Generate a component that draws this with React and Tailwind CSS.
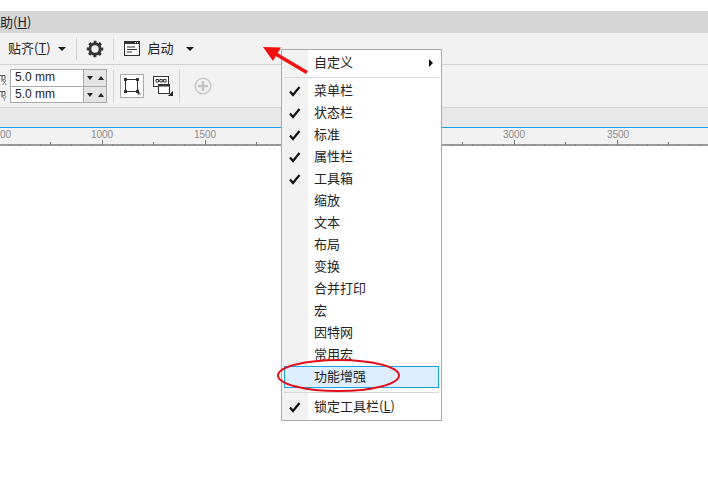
import React from 'react';

const FONT = 'font-["Noto_Sans_CJK_SC","Liberation_Sans",sans-serif]';

const MENU_ITEMS = [
    { label: '菜单栏', checked: true },
    { label: '状态栏', checked: true },
    { label: '标准', checked: true },
    { label: '属性栏', checked: true },
    { label: '工具箱', checked: true },
    { label: '缩放' },
    { label: '文本' },
    { label: '布局' },
    { label: '变换' },
    { label: '合并打印' },
    { label: '宏' },
    { label: '因特网' },
    { label: '常用宏' },
];

const Caret = ({ className = '' }) => (
    <svg width="8" height="4" viewBox="0 0 8 4" className={className}>
        <path d="M0 0h8L4 4z" fill="#1a1a1a" />
    </svg>
);

const Check = () => (
    <svg width="12" height="12" viewBox="0 0 12 12">
        <path d="M1 6.5 4 10 10.5 2" fill="none" stroke="#111" strokeWidth="2.2" />
    </svg>
);

const Divider = ({ className = '' }) => <div className={`w-px bg-[#d4d4d4] ${className}`} />;

const Gear = () => (
    <svg width="18" height="18" viewBox="0 0 18 18">
        <circle cx="9" cy="9" r="5.2" fill="none" stroke="#333" strokeWidth="3" />
        <circle cx="9" cy="9" r="7.2" fill="none" stroke="#333" strokeWidth="2.2" strokeDasharray="2.9 2.75" strokeDashoffset="1.45" transform="rotate(-90 9 9)" />
    </svg>
);

const WindowIcon = () => (
    <svg width="17" height="17" viewBox="0 0 17 17">
        <rect x="0.5" y="1.5" width="15" height="14" fill="#fff" stroke="#333" />
        <rect x="0.5" y="1.5" width="15" height="2.5" fill="#333" />
        <path d="M3 7h8M3 9.5h10M3 12h5" stroke="#333" />
        <path d="M11 2.7h1M13 2.7h1" stroke="#fff" />
    </svg>
);

const SpinRow = ({ topBorder }) => (
    <div className={`flex h-4 ${topBorder ? 'border-t border-[#aaa]' : ''}`}>
        <div className="w-[72px] bg-white pl-1 font-['Liberation_Sans',sans-serif] text-[12px] leading-[15px] text-[#222]">5.0 mm</div>
        <div className="flex flex-1 items-center justify-around border-l border-[#aaa] bg-[#e4e4e4]">
            <svg width="6" height="4" viewBox="0 0 6 4"><path d="M0 0h6L3 4z" fill="#222" /></svg>
            <svg width="6" height="4" viewBox="0 0 6 4"><path d="M0 4h6L3 0z" fill="#222" /></svg>
        </div>
    </div>
);

const AxisIcon = ({ axis }) => (
    <svg width="9" height="16" viewBox="0 0 9 16" className="block">
        <path d="M-2 5.5h4v6M2 5.5h3v4" fill="none" stroke="#555" />
        <path d="M2 9.5h3" stroke="#888" />
        <text x="2" y="15" fontSize="7" fill="#666" fontFamily="Liberation Sans">{axis}</text>
    </svg>
);

const NodeIcon = () => (
    <svg width="18" height="18" viewBox="0 0 18 18">
        <rect x="2.5" y="2.5" width="12" height="12" fill="none" stroke="#333" />
        <path d="M1 1h3v3H1zM13 1h3v3h-3zM1 13h3v3H1zM13 13h3v3h-3z" fill="#333" />
        <path d="M15 12v5.5l1.3-1.2 1.2 1.7" fill="#333" stroke="#333" strokeWidth="0.6" />
    </svg>
);

const PanelIcon = () => (
    <svg width="20" height="20" viewBox="0 0 20 20">
        <rect x="0.5" y="0.5" width="15" height="10" fill="#fff" stroke="#333" />
        <path d="M3 3.5h2.5v2.5H3zM6.8 3.5h2.5v2.5H6.8zM10.5 3.5H13v2.5h-2.5z" fill="none" stroke="#333" />
        <rect x="5.5" y="8.5" width="11" height="9" fill="#fff" stroke="#333" />
        <rect x="5.5" y="8.5" width="11" height="2" fill="#333" />
        <path d="M20 15v5h-5z" fill="#222" />
    </svg>
);

const PlusIcon = () => (
    <svg width="18" height="18" viewBox="0 0 18 18">
        <circle cx="9" cy="9" r="7.8" fill="#f2f2f2" stroke="#c8c8c8" strokeWidth="1.6" />
        <path d="M9 4v10M4 9h10" stroke="#c4c4c4" strokeWidth="2.4" />
    </svg>
);

// 500 units on the ruler = 103px, starting from the tick of "500" at x = -1.5
const Ruler = () => {
    const labels = [
        { x: 102, t: '1000' }, { x: 205, t: '1500' },
        { x: 514, t: '3000' }, { x: 618, t: '3500' },
    ];
    const ticks = [];
    for (let i = 0; i < 70; i++) {
        const x = Math.round(-1.5 + i * 10.3) + 0.5;
        const h = i % 10 === 0 ? 5 : i % 5 === 0 ? 3 : 1;
        ticks.push(<rect key={i} x={x - 0.5} y={17 - h} width="1" height={h} fill="#777" />);
    }
    return (
        <svg width="708" height="17" viewBox="0 0 708 17" className="block">
            {ticks}
            <text x="0" y="10" fontSize="10" fill="#8a8a8a" fontFamily="Liberation Sans">00</text>
            {labels.map((l) => (
                <text key={l.t} x={l.x} y="10" textAnchor="middle" fontSize="10" fill="#8a8a8a" fontFamily="Liberation Sans">{l.t}</text>
            ))}
        </svg>
    );
};

const ContextMenu = () => (
    <div className="absolute left-[281px] top-[49px] flex h-[372px] w-[161px] flex-col border border-[#aaa] bg-white text-[13px] text-[#222]">
        <div className="absolute bottom-0 left-0 top-0 w-[26px] bg-[#f2f2f2]" />
        <div className="relative flex h-[25px] items-center pl-8 pr-2">
            <span className="flex-1 pb-[2px]">自定义</span>
            <svg width="4" height="8" viewBox="0 0 4 8"><path d="M0 0l4 4-4 4z" fill="#111" /></svg>
        </div>
        <div className="relative mx-[2px] mb-[2px] mt-[2px] h-px bg-[#d8d8d8]" />
        <div className="relative">
            {MENU_ITEMS.map((item) => (
                <div key={item.label} className="flex h-[22px] items-center">
                    <span className="flex w-[32px] justify-center pr-[7px]">{item.checked && <Check />}</span>
                    <span className="pb-[2px]">{item.label}</span>
                </div>
            ))}
            <div className="mx-[2px] flex h-[22px] items-center border border-[#1ba1e2] bg-[#dceeff] pb-[2px] pl-[29px]">功能增强</div>
        </div>
        <div className="relative mx-[2px] mb-[3px] mt-[4px] h-px bg-[#d8d8d8]" />
        <div className="relative flex h-[22px] items-center">
            <span className="flex w-[32px] justify-center pr-[7px]"><Check /></span>
            <span className="pb-[2px]">锁定工具栏(<span className="underline">L</span>)</span>
        </div>
    </div>
);

const Annotations = () => (
    <svg width="708" height="486" viewBox="0 0 708 486" className="pointer-events-none absolute left-0 top-0">
        <path d="M307 72.5 274 53" stroke="#f01010" strokeWidth="3.6" fill="none" />
        <path d="M263 47 281 47.5 273 61z" fill="#f01010" />
        <ellipse cx="338.5" cy="375.5" rx="60.5" ry="15.5" fill="none" stroke="#e0101c" strokeWidth="2" />
    </svg>
);

export default function App() {
    return (
        <div className={`relative h-[486px] w-[708px] overflow-hidden bg-white ${FONT}`}>
            <div className="h-[11px]" />
            <div className="flex h-[22px] items-center bg-[#d6d6d6] text-[13px] text-[#222]">
                <span>助(<span className="underline">H</span>)</span>
            </div>
            <div className="flex h-[32px] items-center border-b border-[#d0d0d0] bg-[#f2f2f2] pl-2 text-[13px] text-[#222]">
                <span className="pb-[2px]">贴齐(<span className="underline">T</span>)</span>
                <Caret className="ml-[7px]" />
                <Divider className="ml-[10px] h-[22px]" />
                <span className="ml-[9px] flex"><Gear /></span>
                <Divider className="ml-[9px] h-[22px]" />
                <span className="ml-[10px] flex"><WindowIcon /></span>
                <span className="ml-[7px] pb-[2px]">启动</span>
                <Caret className="ml-[12px]" />
            </div>
            <div className="flex h-[43px] items-center border-b border-[#d0d0d0] bg-[#f2f2f2]">
                <div className="flex w-[10px] flex-col">
                    <AxisIcon axis="X" />
                    <AxisIcon axis="Y" />
                </div>
                <div className="w-[97px] border border-[#aaa]">
                    <SpinRow />
                    <SpinRow topBorder />
                </div>
                <Divider className="ml-[6px] h-[33px]" />
                <div className="ml-[6px] flex h-6 w-6 items-center justify-center border border-[#aaa] bg-white"><NodeIcon /></div>
                <div className="ml-[9px] flex"><PanelIcon /></div>
                <Divider className="ml-[6px] h-[33px]" />
                <div className="ml-[14px] flex"><PlusIcon /></div>
            </div>
            <div className="h-[20px] border-b border-[#1ba1e2] bg-[#e8e8e8]" />
            <div className="h-[18px] border-b-2 border-[#999] bg-[#f2f2f2]">
                <Ruler />
            </div>
            <ContextMenu />
            <Annotations />
        </div>
    );
}
